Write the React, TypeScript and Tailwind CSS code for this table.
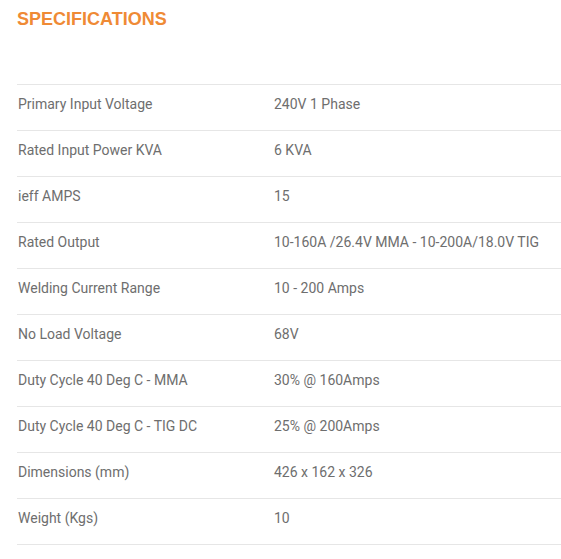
const SPECS: [string, string][] = [
  ['Primary Input Voltage', '240V 1 Phase'],
  ['Rated Input Power KVA', '6 KVA'],
  ['ieff AMPS', '15'],
  ['Rated Output', '10-160A /26.4V MMA - 10-200A/18.0V TIG'],
  ['Welding Current Range', '10 - 200 Amps'],
  ['No Load Voltage', '68V'],
  ['Duty Cycle 40 Deg C - MMA', '30% @ 160Amps'],
  ['Duty Cycle 40 Deg C - TIG DC', '25% @ 200Amps'],
  ['Dimensions (mm)', '426 x 162 x 326'],
  ['Weight (Kgs)', '10'],
]

export default function App() {
  return (
    <div className="w-[561px] h-[559px] bg-white overflow-hidden">
      {/* ── Titre ── */}
      <h2
        className="pl-[17px] pt-[8px] text-[18px] leading-[22px] font-bold text-[#ef8a35]"
        style={{ fontFamily: '"Liberation Sans", Arial, sans-serif' }}
      >
        SPECIFICATIONS
      </h2>

      {/* ── Tableau ── */}
      <div
        className="mt-[54px] ml-[17px] border-b border-[#e6e6e6] text-[14px] text-[#6e6e6e]"
        style={{ fontFamily: 'Roboto, sans-serif' }}
      >
        {SPECS.map(([label, value]) => (
          <div key={label} className="flex h-[46px] border-t border-[#e6e6e6] pt-[10px] leading-[18px]">
            <span className="w-[257px] pl-px shrink-0">{label}</span>
            <span>{value}</span>
          </div>
        ))}
      </div>
    </div>
  )
}
